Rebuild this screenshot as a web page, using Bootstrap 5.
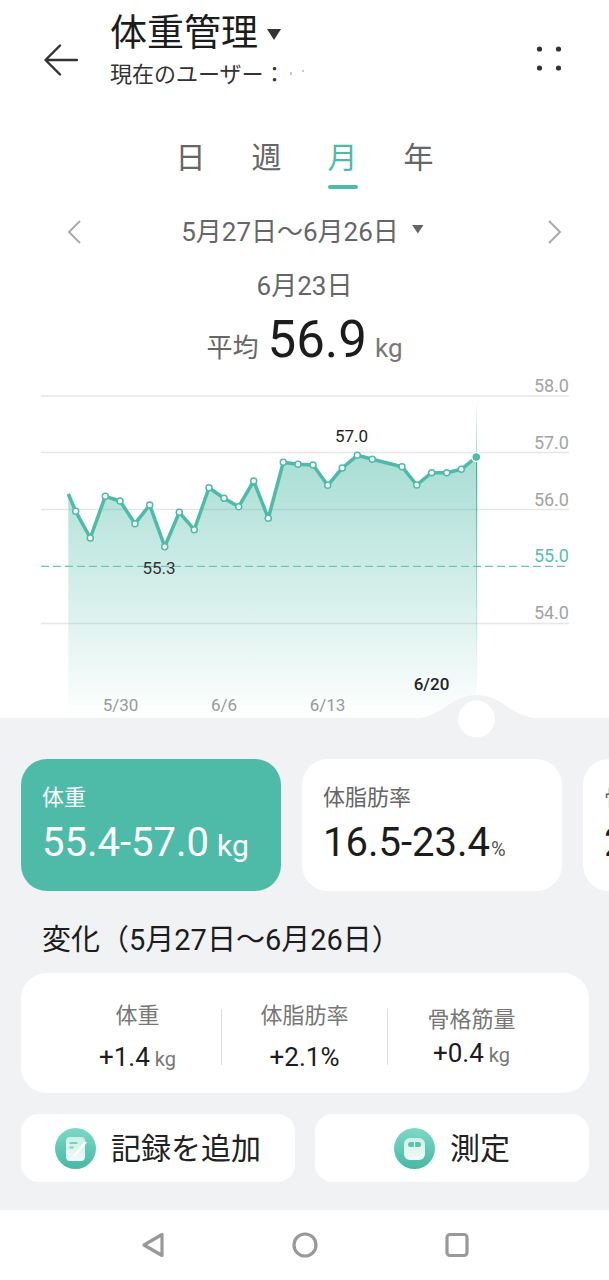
<!DOCTYPE html>
<html lang="ja">
<head>
    <meta charset="UTF-8">
    <title>体重管理</title>
    <link href="https://cdn.jsdelivr.net/npm/bootstrap@5.3.2/dist/css/bootstrap.min.css" rel="stylesheet">
    <style>
        body { width: 609px; height: 1280px; overflow: hidden; background: #fff; color: #1c1c1c;
            font-family: Roboto, "Noto Sans CJK JP", sans-serif; font-weight: 400; }
        .app-header { height: 112px; padding: 0 46px 0 44px; }
        .back-icon { width: 34px; height: 32px; margin-right: 32px; margin-top: 44px; }
        .more-icon { margin-top: 46px; }
        .app-title { font-size: 37px; line-height: 44px; margin-top: 12px; }
        .app-sub { font-size: 22px; line-height: 30px; margin-top: 4px; color: #333; }
        .caret-dark { display: inline-block; width: 14px; height: 11px; margin-left: 9px; background: #333;
            clip-path: polygon(0 0, 100% 0, 50% 100%); vertical-align: 6px; }
        .name-specks { margin-left: 4px; vertical-align: 6px; }
        .range-tabs { gap: 46px; height: 79px; padding-top: 24px; font-size: 30px; line-height: 44px; color: #666; }
        .range-tab { width: 30px; text-align: center; }
        .range-tab.on { color: #4dbba8; position: relative; }
        .range-tab.on::after { content: ""; display: block; width: 30px; height: 4px; border-radius: 2px;
            background: #4dbba8; margin-top: 5px; }
        .date-row { height: 42px; padding: 0 46px 0 66px; font-size: 26px; color: #666; margin-top: 20px; }
        .date-text { margin-right: 24px; }
        .caret-grey { display: inline-block; width: 12px; height: 9px; margin-left: 13px; background: #666;
            clip-path: polygon(0 0, 100% 0, 50% 100%); vertical-align: 7px; }
        .day-label { font-size: 26px; line-height: 36px; color: #666; margin-top: 15px; }
        .avg-row { line-height: 60px; height: 60px; margin-top: 6px; color: #666; font-size: 26px; }
        .avg-num { font-size: 51px; color: #1c1c1c; margin: 0 8px 0 9px; }
        .avg-unit { font-size: 26px; color: #777; }
        .chart-box { display: block; width: 609px; height: 348px; overflow: visible; }
        .chart-box text { font-family: Roboto, sans-serif; }
        .panel-area { background: #f1f2f4; height: 492px; padding: 41px 0 0 21px; }
        .stat-strip { gap: 21px; width: 588px; overflow: hidden; }
        .stat-card { flex: 0 0 260px; height: 132px; border-radius: 26px; background: #fff; padding: 22px 21px; }
        .stat-card.on { background: #4dbba8; color: #fff; }
        .stat-name { font-size: 22px; line-height: 34px; color: #666; }
        .stat-card.on .stat-name { color: #fff; }
        .stat-val { font-size: 40px; line-height: 48px; margin-top: 4px; white-space: nowrap; }
        .stat-unit { font-size: 30px; margin-left: 8px; }
        .stat-pct { font-size: 20px; margin-left: 1px; color: #555; }
        .change-head { font-size: 29px; line-height: 40px; margin: 29px 0 0 21px; }
        .change-card { width: 568px; height: 120px; margin-top: 13px; border-radius: 26px; background: #fff; padding-left: 33px; }
        .change-col { width: 167px; text-align: center; height: 56px; margin-top: 8px; }
        .change-col.mid { border-left: 1px solid #ddd; border-right: 1px solid #ddd; }
        .change-name { font-size: 22px; line-height: 30px; color: #777; margin-top: -8px; }
        .change-val { font-size: 26px; line-height: 32px; margin-top: 10px; }
        .change-unit { font-size: 20px; color: #777; margin-left: 5px; }
        .col-shift .change-name { margin-top: -4px; }
        .col-shift .change-val { margin-top: 2px; }
        .action-row { gap: 20px; width: 568px; margin-top: 21px; }
        .action-btn { width: 274px; height: 68px; border-radius: 18px; background: #fff; font-size: 30px; gap: 15px; color: #222; }
        .action-icon { width: 41px; height: 41px; }
        .sys-nav { height: 70px; gap: 127px; }
    </style>
</head>
<body>

<!-- top bar -->
<div class="app-header d-flex align-items-start">
    <svg class="back-icon" viewBox="0 0 34 32" fill="none" stroke="#333" stroke-width="2.4" stroke-linecap="round" stroke-linejoin="round">
        <path d="M33 16H2M16 1.500 1.500 16 16 30.500"/>
    </svg>
    <div class="flex-grow-1">
        <div class="app-title">体重管理<span class="caret-dark"></span></div>
        <div class="app-sub">現在のユーザー：<svg class="name-specks" width="20" height="6" viewBox="0 0 20 6" fill="#ccc"><rect x="0" y="2" width="2" height="3"/><rect x="12" y="0" width="2" height="2"/></svg></div>
    </div>
    <svg class="more-icon" width="28" height="28" viewBox="0 0 28 28" fill="#333">
        <circle cx="4.500" cy="3" r="2.600"/><circle cx="23.500" cy="3" r="2.600"/>
        <circle cx="4.500" cy="22" r="2.600"/><circle cx="23.500" cy="22" r="2.600"/>
    </svg>
</div>

<!-- day / week / month / year -->
<div class="range-tabs d-flex justify-content-center">
    <div class="range-tab">日</div>
    <div class="range-tab">週</div>
    <div class="range-tab on">月</div>
    <div class="range-tab">年</div>
</div>

<div class="date-row d-flex align-items-center justify-content-between">
    <svg width="18" height="26" viewBox="0 0 18 26" fill="none" stroke="#aaa" stroke-width="2"><path d="M14 2 3 13l11 11"/></svg>
    <div class="date-text">5月27日〜6月26日<span class="caret-grey"></span></div>
    <svg width="18" height="26" viewBox="0 0 18 26" fill="none" stroke="#aaa" stroke-width="2"><path d="M4 2l11 11L4 24"/></svg>
</div>

<div class="day-label text-center">6月23日</div>
<div class="avg-row text-center">平均<span class="avg-num">56.9</span><span class="avg-unit">kg</span></div>

<!-- chart, coordinates are y - 370 of the page -->
<svg id="chart" class="chart-box" viewBox="0 0 609 348" xmlns="http://www.w3.org/2000/svg"></svg>

<div class="panel-area">
    <div class="stat-strip d-flex">
        <div class="stat-card on">
            <div class="stat-name">体重</div>
            <div class="stat-val">55.4-57.0<span class="stat-unit">kg</span></div>
        </div>
        <div class="stat-card">
            <div class="stat-name">体脂肪率</div>
            <div class="stat-val">16.5-23.4<span class="stat-pct">%</span></div>
        </div>
        <div class="stat-card">
            <div class="stat-name">骨格筋量</div>
            <div class="stat-val">20.1-22.3<span class="stat-unit">kg</span></div>
        </div>
    </div>

    <div class="change-head">変化（5月27日〜6月26日）</div>

    <div class="change-card d-flex align-items-center">
        <div class="change-col">
            <div class="change-name">体重</div>
            <div class="change-val">+1.4<span class="change-unit">kg</span></div>
        </div>
        <div class="change-col mid">
            <div class="change-name">体脂肪率</div>
            <div class="change-val">+2.1%</div>
        </div>
        <div class="change-col col-shift">
            <div class="change-name">骨格筋量</div>
            <div class="change-val">+0.4<span class="change-unit">kg</span></div>
        </div>
    </div>

    <div class="action-row d-flex">
        <div class="action-btn d-flex align-items-center justify-content-center">
            <svg class="action-icon" viewBox="0 0 41 41">
                <defs>
                    <linearGradient id="g1" x1="0" y1="0" x2="0" y2="1"><stop offset="0" stop-color="#7dd8c6"/><stop offset="1" stop-color="#45b9a4"/></linearGradient>
                    <linearGradient id="g2" x1="0" y1="0" x2="0" y2="1"><stop offset="0" stop-color="#cdefe7"/><stop offset="1" stop-color="#f2fbf9"/></linearGradient>
                </defs>
                <circle cx="20.500" cy="20.500" r="20.500" fill="url(#g1)"/>
                <rect x="11" y="9" width="19" height="24" rx="4" fill="url(#g2)"/>
                <path d="M14.500 15h8M14.500 19.500h4" stroke="#7dd0bf" stroke-width="1.800" fill="none"/>
                <path d="M19 28 31 14" stroke="#fff" stroke-width="2.200" fill="none"/>
            </svg>
            <span>記録を追加</span>
        </div>
        <div class="action-btn d-flex align-items-center justify-content-center">
            <svg class="action-icon" viewBox="0 0 41 41">
                <circle cx="20.500" cy="20.500" r="20.500" fill="url(#g1)"/>
                <rect x="10" y="10" width="21" height="22" rx="6" fill="url(#g2)"/>
                <rect x="14" y="14" width="13" height="5" rx="2.500" fill="#5cc0ae"/>
                <path d="M20.500 14v5" stroke="#e6f7f3" stroke-width="1.200"/>
            </svg>
            <span>測定</span>
        </div>
    </div>
</div>

<!-- android nav -->
<div class="sys-nav d-flex align-items-center justify-content-center">
    <svg width="24" height="26" viewBox="0 0 24 26" fill="none" stroke="#999" stroke-width="3.200" stroke-linejoin="round"><path d="M21 2.500V23.500L3 13z"/></svg>
    <svg width="26" height="26" viewBox="0 0 26 26" fill="none" stroke="#999" stroke-width="3.200"><circle cx="13" cy="13" r="11"/></svg>
    <svg width="24" height="26" viewBox="0 0 24 26" fill="none" stroke="#999" stroke-width="3.200"><rect x="2" y="2.500" width="20" height="21" rx="3"/></svg>
</div>

<script>
    // weight points as page coordinates, read off the reference
    const points = [[75.7,511.3],[90.3,538],[105.3,496.3],[120,501],[135,523.7],[149.7,505],[164.7,546.7],[179.3,512.3],[194.3,529.7],[209,487.7],[224,498.3],[238.7,506.7],[253.7,481],[268.3,518.3],[283.3,462.3],[298,464.3],[313,465],[327.7,485.3],[342.3,468],[357.3,455.3],[372.3,459.3],[402,466.7],[416.7,485],[431.7,472.7],[446.7,472.7],[461.3,469.3]];
    const last = [476.3, 457];
    const Y = y => (y - 370).toFixed(1);
    const line = [[68.3,494], ...points, last].map(p => p[0] + ',' + Y(p[1])).join(' ');

    let s = `<defs><linearGradient id="areaFill" x1="0" y1="0" x2="0" y2="1">
        <stop offset="0" stop-color="#4dbba8" stop-opacity=".5"/><stop offset="1" stop-color="#4dbba8" stop-opacity="0"/></linearGradient>
        <linearGradient id="cursorUp" x1="0" y1="0" x2="0" y2="1">
        <stop offset="0" stop-color="#4dbba8" stop-opacity="0"/><stop offset="1" stop-color="#4dbba8" stop-opacity=".6"/></linearGradient>
        <linearGradient id="cursorDown" x1="0" y1="0" x2="0" y2="1">
        <stop offset="0" stop-color="#3fa996"/><stop offset="1" stop-color="#4dbba8" stop-opacity="0"/></linearGradient></defs>`;

    [396, 452.5, 509.5, 623.5].forEach(y => {
        s += `<line x1="41" x2="569" y1="${Y(y)}" y2="${Y(y)}" stroke="#e6e6e6" stroke-width="1.500"/>`;
    });
    s += `<polygon points="68.3,${Y(450)} ${line} 476.3,348 68.3,348" fill="url(#areaFill)"/>`;
    s += `<line x1="41" x2="569" y1="${Y(566.3)}" y2="${Y(566.3)}" stroke="#6fc4b5" stroke-width="1.300" stroke-dasharray="8 4"/>`;
    s += `<rect x="476" y="${Y(400)}" width="1" height="57" fill="url(#cursorUp)"/>`;
    s += `<rect x="476" y="${Y(457)}" width="1.200" height="235" fill="url(#cursorDown)"/>`;
    s += `<polyline points="${line}" fill="none" stroke="#4dbba8" stroke-width="3.500" stroke-linejoin="round"/>`;
    points.forEach(p => {
        s += `<circle cx="${p[0]}" cy="${Y(p[1])}" r="3" fill="#fff" stroke="#4dbba8" stroke-width="1.500"/>`;
    });
    s += `<circle cx="${last[0]}" cy="${Y(last[1])}" r="4.500" fill="#4dbba8" stroke="#fff" stroke-width="1.500"/>`;

    [['58.0',392,'#a3a3a3'],['57.0',449,'#a3a3a3'],['56.0',506,'#a3a3a3'],['55.0',562,'#58bfad'],['54.0',619,'#a3a3a3']].forEach(t => {
        s += `<text x="569" y="${Y(t[1])}" text-anchor="end" font-size="18" fill="${t[2]}">${t[0]}</text>`;
    });
    s += `<text x="159" y="${Y(574)}" text-anchor="middle" font-size="17" fill="#333">55.3</text>`;
    s += `<text x="351.500" y="${Y(442)}" text-anchor="middle" font-size="17" fill="#222">57.0</text>`;
    [['5/30',120.500],['6/6',224],['6/13',327.500]].forEach(t => {
        s += `<text x="${t[1]}" y="${Y(711)}" text-anchor="middle" font-size="17" fill="#999">${t[0]}</text>`;
    });
    s += `<text x="431.500" y="${Y(690)}" text-anchor="middle" font-size="17" font-weight="500" fill="#222">6/20</text>`;

    // slider bump on the panel edge
    s += `<path d="M412 348.500C442 348.500 450 325 476.500 325S511 348.500 541 348.500z" fill="#f1f2f4"/>`;
    s += `<circle cx="476.500" cy="349" r="18.500" fill="#fff"/>`;
    document.getElementById('chart').innerHTML = s;
</script>

<script src="https://cdn.jsdelivr.net/npm/bootstrap@5.3.2/dist/js/bootstrap.bundle.min.js"></script>
</body>
</html>
